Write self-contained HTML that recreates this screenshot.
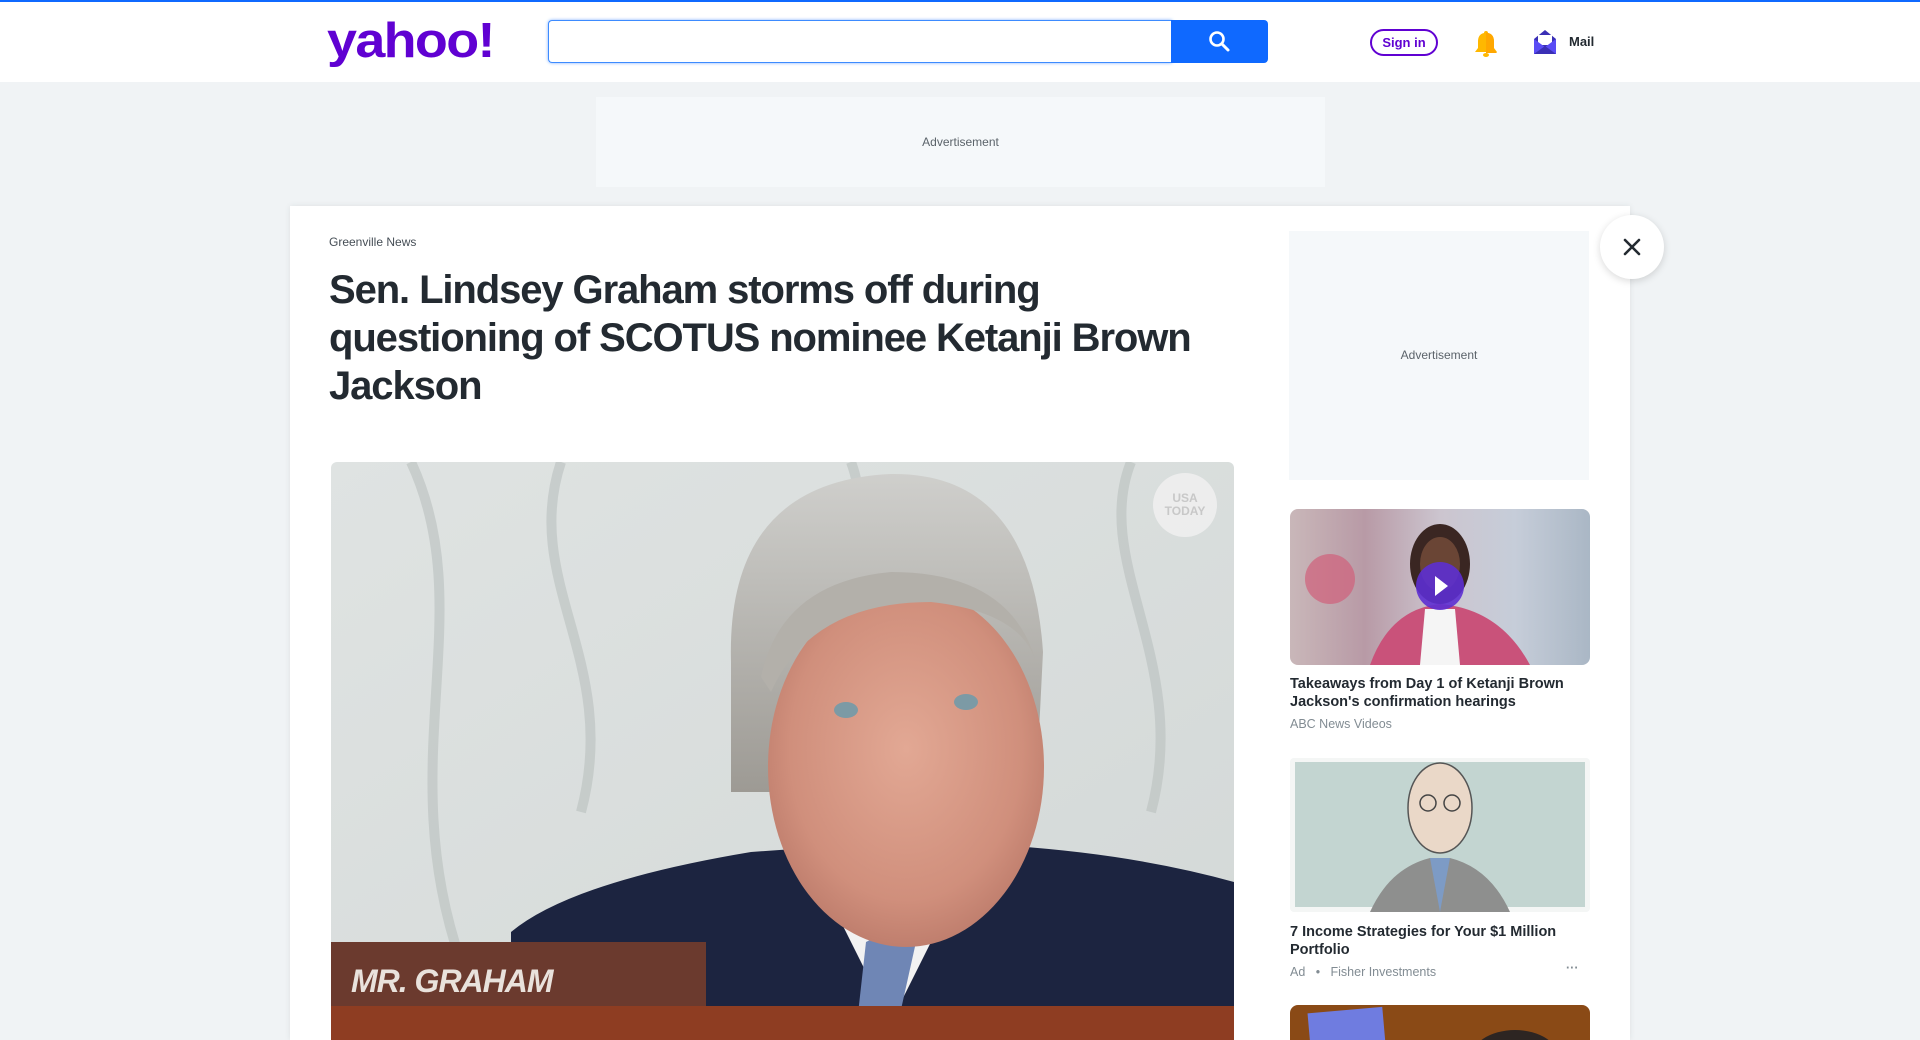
<!DOCTYPE html>
<html><head><meta charset="utf-8">
<style>
*{margin:0;padding:0;box-sizing:border-box}
html,body{width:1920px;height:1040px;overflow:hidden;background:#f0f3f5;font-family:"Liberation Sans",sans-serif;position:relative}
.abs{position:absolute}
#topline{left:0;top:0;width:1920px;height:2px;background:#0f69ff}
#header{left:0;top:2px;width:1920px;height:80px;background:#fff}
#logo{left:327px;top:16px;font-size:49px;font-weight:bold;color:#6001d2;line-height:50px;transform:scaleX(1.1);transform-origin:left top;letter-spacing:-1.5px}
#search{left:548px;top:20px;width:624px;height:43px;border:1px solid #3d8bff;border-right:none;border-radius:4px 0 0 4px;background:#fff;box-shadow:0 0 3px #7fb0ff}
#sbtn{left:1171px;top:20px;width:97px;height:43px;background:#0f69ff;border-radius:0 4px 4px 0}
#signin{left:1370px;top:29px;width:68px;height:27px;border:2px solid #6001d2;border-radius:14px;color:#6001d2;font-weight:bold;font-size:13px;text-align:center;line-height:23px}
#mail{left:1569px;top:34px;font-size:13px;font-weight:bold;color:#232a31}
#ad1{left:596px;top:97px;width:729px;height:90px;background:#f5f8fa;color:#5b636a;font-size:12px;text-align:center;line-height:90px}
#card{left:290px;top:206px;width:1340px;height:834px;background:#fff;box-shadow:0 0 6px rgba(0,0,0,.08)}
#close{left:1600px;top:215px;width:64px;height:64px;border-radius:50%;background:#fff;box-shadow:0 2px 8px rgba(0,0,0,.15)}
#src{left:329px;top:235px;font-size:12px;color:#464e56}
#h1{left:329px;top:266px;font-size:40px;font-weight:bold;color:#232a31;line-height:48px;letter-spacing:-1.1px;white-space:nowrap}
#img{left:331px;top:462px;width:903px;height:578px;overflow:hidden;border-radius:6px 6px 0 0}
#ad2{left:1289px;top:231px;width:300px;height:249px;background:#f5f8fa;color:#5b636a;font-size:12px;text-align:center;line-height:249px}
.th{left:1290px;width:300px;border-radius:8px;overflow:hidden}
.tt{left:1290px;width:300px;font-size:14.5px;font-weight:bold;color:#232a31;line-height:18px}
.meta{left:1290px;font-size:12.5px;color:#828c93}
</style></head><body>
<div id="topline" class="abs"></div>
<div id="header" class="abs"></div>
<div id="logo" class="abs">yahoo!</div>
<div id="search" class="abs"></div>
<div id="sbtn" class="abs"><svg width="97" height="43"><circle cx="46" cy="19" r="6.5" fill="none" stroke="#fff" stroke-width="2.6"/><line x1="51" y1="24" x2="57" y2="30" stroke="#fff" stroke-width="3" stroke-linecap="round"/></svg></div>
<div id="signin" class="abs">Sign in</div>
<svg class="abs" style="left:1472px;top:29px" width="28" height="30"><path d="M14 2c-1.5 0-2 1-2 2C7 5 6 9 6 13v6l-3 4h22l-3-4v-6c0-4-1-8-6-9 0-1-.5-2-2-2z" fill="#ffb800"/><path d="M14 3v21h11l-3-4v-7c0-4-1-8-6-9z" fill="#ffa700"/><ellipse cx="14" cy="26" rx="3" ry="2" fill="#ffb800"/></svg>
<svg class="abs" style="left:1532px;top:28px" width="26" height="28"><path d="M2 11L13 2l11 9v15H2z" fill="#3a2fb5"/><rect x="6" y="7" width="14" height="10" fill="#fff"/><path d="M2 11l11 8 11-8v15H2z" fill="#5a4cf5"/><path d="M2 26l11-8 11 8z" fill="#3a2fb5"/></svg>
<div id="mail" class="abs">Mail</div>
<div id="ad1" class="abs">Advertisement</div>
<div id="card" class="abs"></div>
<div id="close" class="abs"><svg width="64" height="64"><path d="M25 25L39 39M39 25L25 39" stroke="#232a31" stroke-width="2.6" stroke-linecap="round"/></svg></div>
<div id="src" class="abs">Greenville News</div>
<div id="h1" class="abs">Sen. Lindsey Graham storms off during<br>questioning of SCOTUS nominee Ketanji Brown<br>Jackson</div>
<div id="img" class="abs">
<svg width="903" height="578">
<defs>
<linearGradient id="bg" x1="0" y1="0" x2="1" y2="1"><stop offset="0" stop-color="#dfe3e2"/><stop offset="1" stop-color="#d3d8d7"/></linearGradient>
<radialGradient id="face" cx=".5" cy=".45" r=".6"><stop offset="0" stop-color="#e2a894"/><stop offset=".7" stop-color="#d08f7c"/><stop offset="1" stop-color="#b97868"/></radialGradient>
<linearGradient id="hair" x1="0" y1="0" x2="0" y2="1"><stop offset="0" stop-color="#cfcfcc"/><stop offset="1" stop-color="#9d9a94"/></linearGradient>
</defs>
<rect width="903" height="578" fill="url(#bg)"/>
<path d="M80 0C150 150 60 300 130 500M230 0c-40 120 60 200 20 350M520 0c30 80 -30 150 20 260M640 40c50 120 0 250 40 380M800 0c-40 100 60 200 20 350" stroke="#b9bfbe" stroke-width="10" fill="none" opacity=".6"/>
<path d="M180 470 Q240 420 420 390 L560 380 Q760 380 903 420 L903 578 L180 578z" fill="#1c2440"/>
<path d="M480 400 L560 560 L640 400z" fill="#f2f2f2"/>
<path d="M535 480l20 -10 30 10 -20 90 -40 0z" fill="#6f86b5"/>
<path d="M400 200 Q395 20 560 12 Q700 10 712 190 L705 330 L690 330 L400 330z" fill="url(#hair)"/>
<ellipse cx="575" cy="305" rx="138" ry="180" fill="url(#face)"/>
<path d="M430 215 Q450 120 560 110 Q680 110 705 200 Q690 150 600 140 Q480 140 440 230z" fill="#b3b0aa"/>
<ellipse cx="515" cy="248" rx="12" ry="8" fill="#7c9aa5"/><ellipse cx="635" cy="240" rx="12" ry="8" fill="#7c9aa5"/>
<rect x="0" y="480" width="375" height="65" fill="#6b3a2e"/>
<text x="20" y="530" font-family="Liberation Sans" font-weight="bold" font-style="italic" font-size="32" fill="#e9e2dc" letter-spacing="-1">MR. GRAHAM</text>
<rect x="0" y="544" width="903" height="40" fill="#8e3d22"/>
<circle cx="854" cy="43" r="32" fill="#eeeeee" opacity=".9"/>
<text x="854" y="40" text-anchor="middle" font-family="Liberation Sans" font-weight="bold" font-size="12" fill="#c8c8c8">USA</text>
<text x="854" y="53" text-anchor="middle" font-family="Liberation Sans" font-weight="bold" font-size="12" fill="#c8c8c8">TODAY</text>
</svg></div>
<div id="ad2" class="abs">Advertisement</div>
<div class="abs th" style="top:509px;height:156px;background:linear-gradient(90deg,#c9b7b9 0%,#b89aa6 25%,#ccc5cf 50%,#c6cdd9 75%,#aab7c5 100%)">
<svg width="300" height="156"><circle cx="40" cy="70" r="25" fill="#d0607a" opacity=".7"/><path d="M80 156 Q100 100 150 95 Q210 100 240 156z" fill="#c9527a"/><path d="M130 156 L135 100 L165 100 L170 156z" fill="#f5f5f5"/><ellipse cx="150" cy="55" rx="30" ry="40" fill="#3a2622"/><ellipse cx="150" cy="55" rx="20" ry="27" fill="#6a4535"/><circle cx="150" cy="77" r="24" fill="#5d2fd1" opacity=".9"/><path d="M145 67l13 10-13 10z" fill="#fff"/></svg></div>
<div class="abs tt" style="top:675px">Takeaways from Day 1 of Ketanji Brown Jackson's confirmation hearings</div>
<div class="abs meta" style="top:717px">ABC News Videos</div>
<div class="abs th" style="top:758px;height:154px;background:#f4f6f5;border-radius:4px">
<div style="position:absolute;left:5px;top:4px;width:290px;height:145px;background:#c3d5d1"></div>
<svg width="300" height="154" style="position:absolute;left:0;top:0"><path d="M80 154 Q100 110 140 100 L160 100 Q200 110 220 154z" fill="#8e8f8e"/><path d="M140 100 L150 154 L160 100z" fill="#7d9bc5"/><ellipse cx="150" cy="50" rx="32" ry="45" fill="#ead8c8" stroke="#555" stroke-width="1.5"/><circle cx="138" cy="45" r="8" fill="none" stroke="#444" stroke-width="1.5"/><circle cx="162" cy="45" r="8" fill="none" stroke="#444" stroke-width="1.5"/></svg></div>
<div class="abs tt" style="top:923px">7 Income Strategies for Your $1 Million Portfolio</div>
<div class="abs meta" style="top:965px">Ad &nbsp;&nbsp;•&nbsp;&nbsp; Fisher Investments</div>
<div class="abs meta" style="left:1566px;top:961px;font-weight:bold">···</div>
<div class="abs th" style="top:1005px;height:35px;background:#8a4a16;border-radius:8px 8px 0 0">
<div style="position:absolute;left:20px;top:5px;width:75px;height:60px;background:#6f7ce0;transform:rotate(-5deg)"></div>
<div style="position:absolute;left:180px;top:25px;width:90px;height:60px;border-radius:50%;background:#2d2522"></div></div>
</body></html>
